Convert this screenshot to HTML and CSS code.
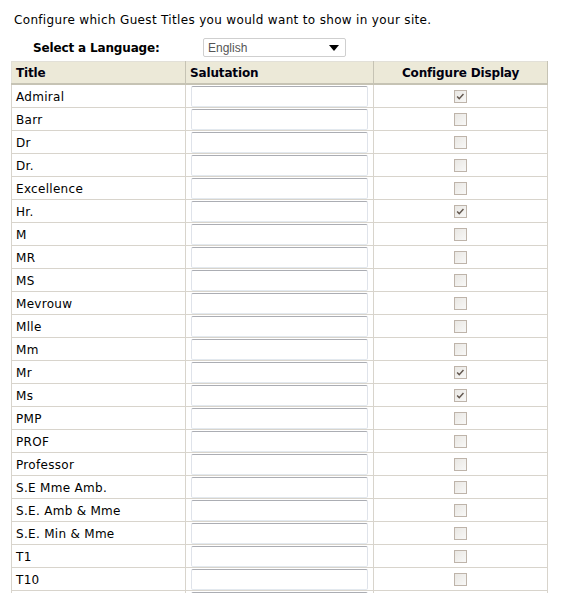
FILE: index.html
```html
<!DOCTYPE html>
<html>
<head>
<meta charset="utf-8">
<link rel="stylesheet" href="styles.css">
</head>
<body>
<div class="page">
  <p class="intro">Configure which Guest Titles you would want to show in your site.</p>
  <div class="lang-row">
    <span class="lang-label">Select a Language:</span>
    <div class="select-wrap">
      <select class="lang-select"><option>English</option></select>
    </div>
  </div>
  <table class="titles">
    <colgroup><col class="c1"><col class="c2"><col class="c3"></colgroup>
    <thead>
      <tr><th>Title</th><th>Salutation</th><th class="center">Configure Display</th></tr>
    </thead>
    <tbody>
      <tr><td>Admiral</td><td class="inp"><input type="text"></td><td class="center"><span class="cb checked"><svg viewBox="0 0 13 13" width="11" height="11"><path d="M2.5 6.5 L5 9 L10 3.5" fill="none" stroke="#62574f" stroke-width="1.7"/></svg></span></td></tr>
      <tr><td>Barr</td><td class="inp"><input type="text"></td><td class="center"><span class="cb"></span></td></tr>
      <tr><td>Dr</td><td class="inp"><input type="text"></td><td class="center"><span class="cb"></span></td></tr>
      <tr><td>Dr.</td><td class="inp"><input type="text"></td><td class="center"><span class="cb"></span></td></tr>
      <tr><td>Excellence</td><td class="inp"><input type="text"></td><td class="center"><span class="cb"></span></td></tr>
      <tr><td>Hr.</td><td class="inp"><input type="text"></td><td class="center"><span class="cb checked"><svg viewBox="0 0 13 13" width="11" height="11"><path d="M2.5 6.5 L5 9 L10 3.5" fill="none" stroke="#62574f" stroke-width="1.7"/></svg></span></td></tr>
      <tr><td>M</td><td class="inp"><input type="text"></td><td class="center"><span class="cb"></span></td></tr>
      <tr><td>MR</td><td class="inp"><input type="text"></td><td class="center"><span class="cb"></span></td></tr>
      <tr><td>MS</td><td class="inp"><input type="text"></td><td class="center"><span class="cb"></span></td></tr>
      <tr><td>Mevrouw</td><td class="inp"><input type="text"></td><td class="center"><span class="cb"></span></td></tr>
      <tr><td>Mlle</td><td class="inp"><input type="text"></td><td class="center"><span class="cb"></span></td></tr>
      <tr><td>Mm</td><td class="inp"><input type="text"></td><td class="center"><span class="cb"></span></td></tr>
      <tr><td>Mr</td><td class="inp"><input type="text"></td><td class="center"><span class="cb checked"><svg viewBox="0 0 13 13" width="11" height="11"><path d="M2.5 6.5 L5 9 L10 3.5" fill="none" stroke="#62574f" stroke-width="1.7"/></svg></span></td></tr>
      <tr><td>Ms</td><td class="inp"><input type="text"></td><td class="center"><span class="cb checked"><svg viewBox="0 0 13 13" width="11" height="11"><path d="M2.5 6.5 L5 9 L10 3.5" fill="none" stroke="#62574f" stroke-width="1.7"/></svg></span></td></tr>
      <tr><td>PMP</td><td class="inp"><input type="text"></td><td class="center"><span class="cb"></span></td></tr>
      <tr><td>PROF</td><td class="inp"><input type="text"></td><td class="center"><span class="cb"></span></td></tr>
      <tr><td>Professor</td><td class="inp"><input type="text"></td><td class="center"><span class="cb"></span></td></tr>
      <tr><td>S.E Mme Amb.</td><td class="inp"><input type="text"></td><td class="center"><span class="cb"></span></td></tr>
      <tr><td>S.E. Amb &amp; Mme</td><td class="inp"><input type="text"></td><td class="center"><span class="cb"></span></td></tr>
      <tr><td>S.E. Min &amp; Mme</td><td class="inp"><input type="text"></td><td class="center"><span class="cb"></span></td></tr>
      <tr><td>T1</td><td class="inp"><input type="text"></td><td class="center"><span class="cb"></span></td></tr>
      <tr><td>T10</td><td class="inp"><input type="text"></td><td class="center"><span class="cb"></span></td></tr>
      <tr><td></td><td class="inp"><input type="text"></td><td class="center"><span class="cb"></span></td></tr>
    </tbody>
  </table>
</div>
</body>
</html>
```
FILE: styles.css
```css
html, body {
  margin: 0;
  padding: 0;
  background: #fff;
}
body {
  font-family: "DejaVu Sans", Verdana, sans-serif;
  font-size: 12px;
  color: #000;
}
.page {
  padding: 12px 0 0 11px;
}
.intro {
  margin: 0 0 0 3px;
  line-height: 16px;
  letter-spacing: 0.33px;
}
.lang-row {
  display: flex;
  align-items: center;
  margin-top: 10px;
  height: 19px;
}
.lang-label {
  font-weight: bold;
  margin-left: 22px;
  width: 170px;
  letter-spacing: -0.15px;
}
.select-wrap {
  position: relative;
  width: 143px;
  height: 19px;
}
.select-wrap::after {
  content: "";
  position: absolute;
  right: 7px;
  top: 7px;
  border-left: 5px solid transparent;
  border-right: 5px solid transparent;
  border-top: 6px solid #000;
  pointer-events: none;
}
.lang-select {
  appearance: none;
  -webkit-appearance: none;
  width: 143px;
  height: 19px;
  margin: 0;
  border: 1px solid #cfcfcf;
  border-radius: 2px;
  background: #fff;
  font-family: "Liberation Sans", Arial, sans-serif;
  font-size: 12px;
  color: #555;
  padding: 0 0 0 4px;
}
.titles {
  border-collapse: collapse;
  table-layout: fixed;
  width: 536px;
  margin-top: 4px;
}
.c1 { width: 174px; }
.c2 { width: 188px; }
.c3 { width: 174px; }
.titles th {
  background: #ece9d8;
  height: 21px;
  padding: 0 4px;
  text-align: left;
  font-weight: bold;
  color: #000010;
  letter-spacing: -0.15px;
  border-top: 1px solid #e2e0d8;
  border-bottom: 2px solid #c6c3b4;
  border-left: 1px solid #fff;
  border-right: 1px solid #c6c3b4;
}
.titles th:first-child {
  border-left: 1px solid #e2e0d8;
}
.titles td {
  height: 21px;
  padding: 1px 4px 0;
  border: 1px solid #d8d4cc;
  white-space: nowrap;
  letter-spacing: 0.3px;
}
.titles .center {
  text-align: center;
}
.titles td.inp {
  padding: 0 0 0 5px;
}
.titles td.center {
  padding: 0 4px;
}
.inp input {
  display: block;
  box-sizing: border-box;
  width: 177px;
  height: 21px;
  margin: 0;
  border: 1px solid #dfe3ea;
  border-top-color: #abadb3;
  border-bottom-color: #e3e9ef;
  border-radius: 2px;
  background: #fff;
}
.cb {
  display: inline-flex;
  align-items: center;
  justify-content: center;
  box-sizing: border-box;
  width: 13px;
  height: 13px;
  border: 1px solid #beb4aa;
  background: linear-gradient(135deg, #e9e7e3, #f8f8f7);
  vertical-align: middle;
}
```
